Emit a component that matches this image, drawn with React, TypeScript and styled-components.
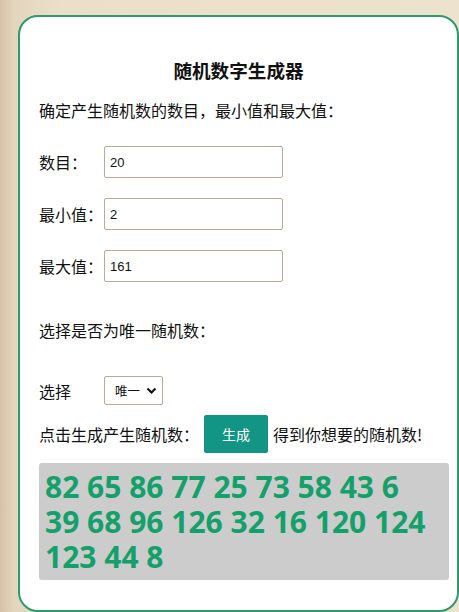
import styled, { createGlobalStyle } from 'styled-components'

const Global = createGlobalStyle`
  html, body {
    margin: 0;
    padding: 0;
  }
  body {
    width: 459px;
    height: 612px;
    overflow: hidden;
    background: linear-gradient(90deg, #d6c2a6 0px, #e4d5bd 14px, #ebdfc9 60px, #ede2cd 100%);
    font-family: "Noto Sans CJK SC", "Noto Sans", sans-serif;
    color: #111;
  }
`

const Card = styled.div`
  box-sizing: border-box;
  margin: 15px 0 0 18px;
  width: 441px;
  height: 597px;
  background: #fff;
  border: 2px solid #2a9b6a;
  border-radius: 20px;
  padding: 0 8px 0 19px;
  display: flex;
  flex-direction: column;
`

const Title = styled.h1`
  margin: 41px -8px 0 -19px;
  font-size: 18.6px;
  line-height: 24px;
  font-weight: 700;
  text-align: center;
`

const Text = styled.p<{ $top: number }>`
  margin: ${p => p.$top}px 0 0;
  font-size: 16px;
  line-height: 22px;
`

const Row = styled.div<{ $top: number; $h: number }>`
  margin-top: ${p => p.$top}px;
  height: ${p => p.$h}px;
  display: flex;
  align-items: center;
  font-size: 16px;
  white-space: nowrap;
`

const Label = styled.span`
  width: 65px;
  flex-shrink: 0;
`

const Input = styled.input`
  box-sizing: border-box;
  width: 179px;
  height: 32px;
  border: 1px solid #c2a698;
  border-radius: 2px;
  padding: 0 5px;
  font-family: "Liberation Sans", Arial, sans-serif;
  font-size: 13px;
  color: #111;
  outline: none;
`

const SelectBox = styled.div`
  box-sizing: border-box;
  width: 59px;
  height: 29px;
  border: 1px solid #c2a698;
  border-radius: 2px;
  display: flex;
  align-items: center;
  padding: 0 0 0 10px;
  gap: 6px;
  font-size: 12.5px;
`

const GenButton = styled.button`
  box-sizing: border-box;
  flex-shrink: 0;
  width: 64px;
  height: 38px;
  margin: 0 5px 0 5px;
  border: none;
  border-radius: 2px;
  background: #139585;
  color: #fff;
  font-family: "Noto Sans CJK SC", sans-serif;
  font-size: 14px;
  cursor: pointer;
`

const Result = styled.div`
  box-sizing: border-box;
  margin-top: 10px;
  width: 410px;
  height: 117px;
  background: #cccccc;
  border-radius: 3px;
  padding: 6px 18px 0 6px;
  font-family: "Open Sans", "Noto Sans", sans-serif;
  font-weight: 700;
  font-size: 30px;
  line-height: 35px;
  color: #14a06a;
`

const numbers = [82, 65, 86, 77, 25, 73, 58, 43, 6, 39, 68, 96, 126, 32, 16, 120, 124, 123, 44, 8]

export default function App() {
  return (
    <>
      <Global />
      <Card>
        <Title>随机数字生成器</Title>
        <Text $top={17}>确定产生随机数的数目，最小值和最大值：</Text>
        <Row $top={25} $h={32}>
          <Label>数目：</Label>
          <Input defaultValue="20" />
        </Row>
        <Row $top={20} $h={32}>
          <Label>最小值：</Label>
          <Input defaultValue="2" />
        </Row>
        <Row $top={20} $h={32}>
          <Label>最大值：</Label>
          <Input defaultValue="161" />
        </Row>
        <Text $top={37}>选择是否为唯一随机数：</Text>
        <Row $top={35} $h={29}>
          <Label>选择</Label>
          <SelectBox>
            唯一
            <svg width="11" height="8" viewBox="0 0 11 8">
              <path d="M1.5 1.5 L5.5 5.5 L9.5 1.5" fill="none" stroke="#111" strokeWidth="2.2" />
            </svg>
          </SelectBox>
        </Row>
        <Row $top={10} $h={38}>
          <span>点击生成产生随机数：</span>
          <GenButton>生成</GenButton>
          <span>得到你想要的随机数!</span>
        </Row>
        <Result>{numbers.join(' ')}</Result>
      </Card>
    </>
  )
}
